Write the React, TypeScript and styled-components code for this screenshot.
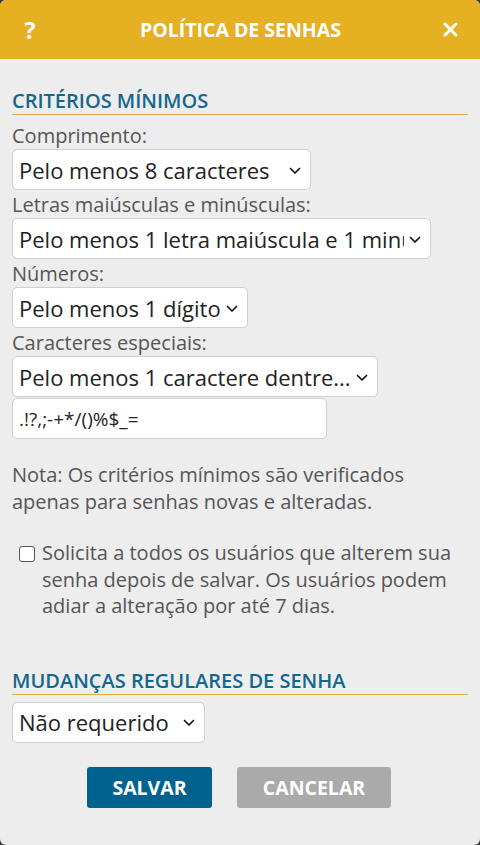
import React from "react";
import styled, { createGlobalStyle } from "styled-components";

const Global = createGlobalStyle`
  html, body { margin: 0; padding: 0; background: #3a3a3a; }
  body { font-family: "Open Sans", "Noto Sans", sans-serif; }
  * { box-sizing: border-box; }
`;

const Dialog = styled.div`
  width: 480px;
  height: 845px;
  background: #ededed;
  border-radius: 6px;
  overflow: hidden;
  display: flex;
  flex-direction: column;
`;

const Header = styled.div`
  height: 59px;
  background: #e5b022;
  display: flex;
  align-items: center;
  justify-content: space-between;
  padding: 0 21px 0 22px;
  color: #fff;
`;

const HeaderIcon = styled.button`
  background: none;
  border: none;
  padding: 0;
  color: #fff;
  font-family: "Open Sans", sans-serif;
  font-weight: 700;
  font-size: 23px;
  width: 16px;
  height: 30px;
  display: flex;
  align-items: center;
  justify-content: center;
`;

const Title = styled.h1`
  margin: 0;
  font-size: 19.5px;
  font-weight: 700;
`;

const Body = styled.div`
  padding: 29px 12px 0 12px;
  display: flex;
  flex-direction: column;
`;

const SectionTitle = styled.h2<{ $top?: number }>`
  margin: ${(p) => p.$top ?? 0}px 0 0 0;
  font-size: 20px;
  font-weight: 600;
  color: #13678f;
  line-height: 26px;
  border-bottom: 1px solid #dcae3a;
`;

const Label = styled.label<{ $top?: number }>`
  display: block;
  font-size: 20px;
  color: #555;
  line-height: 27px;
  margin-top: ${(p) => p.$top ?? 1}px;
`;

const SelectWrap = styled.div<{ $w: number; $top?: number }>`
  position: relative;
  flex: none;
  width: ${(p) => p.$w}px;
  height: 41px;
  margin-top: ${(p) => p.$top ?? 0}px;
`;

const Select = styled.select`
  appearance: none;
  -webkit-appearance: none;
  width: 100%;
  height: 100%;
  background: #fff;
  border: 1px solid #cfcfcf;
  border-radius: 5px;
  font-family: "Open Sans", sans-serif;
  font-size: 22px;
  color: #222;
  padding: 0 26px 0 6px;
  outline: none;
`;

const Chevron = styled.svg`
  position: absolute;
  right: 10px;
  top: 50%;
  margin-top: -3px;
  width: 12px;
  height: 8px;
  pointer-events: none;
`;

const Input = styled.input`
  flex: none;
  width: 315px;
  height: 41px;
  margin-top: 1px;
  background: #fff;
  border: 1px solid #cfcfcf;
  border-radius: 5px;
  font-family: "Open Sans", sans-serif;
  font-size: 19px;
  color: #222;
  padding: 0 6px;
  outline: none;
`;

const Note = styled.p`
  margin: 22px 0 0 0;
  font-size: 20px;
  line-height: 27px;
  color: #555;
`;

const CheckRow = styled.label`
  display: flex;
  align-items: flex-start;
  gap: 7px;
  margin-top: 25px;
  padding-left: 7px;
  font-size: 20px;
  line-height: 26.5px;
  color: #555;
`;

const Box = styled.span`
  flex: none;
  width: 16px;
  height: 16px;
  margin-top: 6px;
  border: 1px solid #555;
  border-radius: 3px;
  background: #fff;
`;

const Buttons = styled.div`
  display: flex;
  justify-content: center;
  gap: 25px;
  margin-top: 24px;
  padding-right: 2px;
`;

const Button = styled.button<{ $primary?: boolean; $w: number }>`
  width: ${(p) => p.$w}px;
  height: 41px;
  border: none;
  border-radius: 3px;
  background: ${(p) => (p.$primary ? "#00628f" : "#aaaaaa")};
  color: #fff;
  font-family: "Open Sans", sans-serif;
  font-weight: 700;
  font-size: 19.5px;
`;

const Dropdown = ({ w, value, top }: { w: number; value: string; top?: number }) => (
  <SelectWrap $w={w} $top={top}>
    <Select defaultValue={value}>
      <option>{value}</option>
    </Select>
    <Chevron viewBox="0 0 12 8">
      <path d="M1.5 1.5 L6 6 L10.5 1.5" fill="none" stroke="#111" strokeWidth="1.7" strokeLinecap="round" strokeLinejoin="round" />
    </Chevron>
  </SelectWrap>
);

export default function App() {
  return (
    <>
      <Global />
      <Dialog>
        <Header>
          <HeaderIcon>?</HeaderIcon>
          <Title>POLÍTICA DE SENHAS</Title>
          <HeaderIcon aria-label="Fechar">
            <svg width="15" height="15" viewBox="0 0 15 15">
              <path d="M2 2 L13 13 M13 2 L2 13" stroke="#fff" strokeWidth="3" strokeLinecap="round" />
            </svg>
          </HeaderIcon>
        </Header>
        <Body>
          <SectionTitle>CRITÉRIOS MÍNIMOS</SectionTitle>
          <Label $top={7}>Comprimento:</Label>
          <Dropdown w={299} value="Pelo menos 8 caracteres" />
          <Label>Letras maiúsculas e minúsculas:</Label>
          <Dropdown w={419} value="Pelo menos 1 letra maiúscula e 1 minúscula" />
          <Label>Números:</Label>
          <Dropdown w={236} value="Pelo menos 1 dígito" />
          <Label>Caracteres especiais:</Label>
          <Dropdown w={366} value="Pelo menos 1 caractere dentre..." />
          <Input defaultValue=".!?,;-+*/()%$_=" />
          <Note>
            Nota: Os critérios mínimos são verificados apenas para senhas novas e alteradas.
          </Note>
          <CheckRow>
            <Box />
            <span>
              Solicita a todos os usuários que alterem sua senha depois de salvar. Os usuários podem
              adiar a alteração por até 7 dias.
            </span>
          </CheckRow>
          <SectionTitle $top={48}>MUDANÇAS REGULARES DE SENHA</SectionTitle>
          <Dropdown w={193} value="Não requerido" top={7} />
          <Buttons>
            <Button $primary $w={125}>SALVAR</Button>
            <Button $w={154}>CANCELAR</Button>
          </Buttons>
        </Body>
      </Dialog>
    </>
  );
}
